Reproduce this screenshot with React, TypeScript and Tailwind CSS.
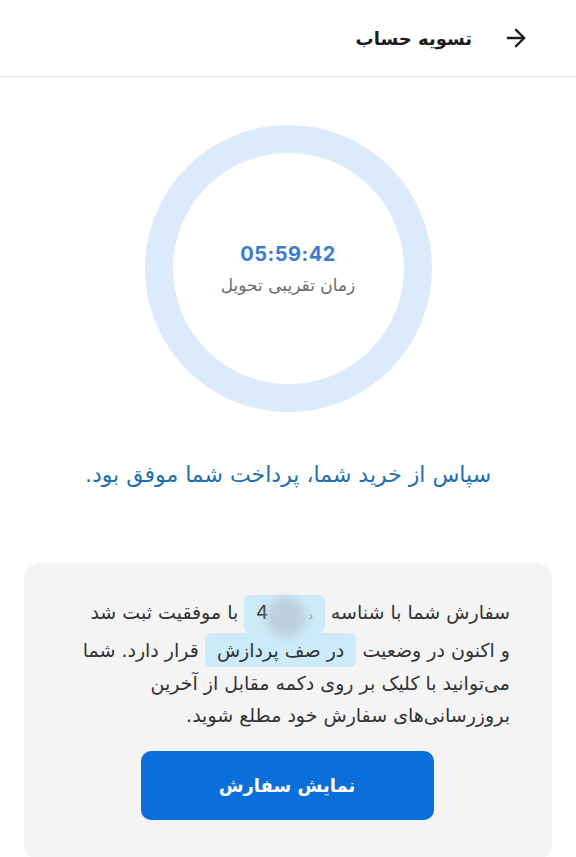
import { ArrowRight } from "lucide-react";

export default function App() {
  return (
    <div
      dir="rtl"
      className="min-h-screen bg-white font-['DejaVu_Sans',sans-serif] text-[#2b2b2b] overflow-hidden"
    >
      {/* Header */}
      <div className="h-[77px] flex items-center gap-[30px] pr-[46px] pl-11 border-b border-gray-200">
        <ArrowRight className="w-7 h-7 text-[#1c1c1c]" strokeWidth={2} />
        <h1 className="text-[18px] font-bold text-[#1c1c1c]">تسویه حساب</h1>
      </div>

      {/* Timer ring */}
      <div className="flex justify-center mt-12">
        <div className="w-[287px] h-[287px] rounded-full border-[28px] border-[#dcebfb] flex flex-col items-center justify-center">
          <div
            dir="ltr"
            className="font-['Inter',sans-serif] font-bold text-[20px] text-[#3a7dd0] tracking-wide"
          >
            05:59:42
          </div>
          <div className="text-[17px] text-[#6b6b6b] mt-1">زمان تقریبی تحویل</div>
        </div>
      </div>

      {/* Success message */}
      <p className="mt-[46px] text-center text-[22px] text-[#1f6fae]">
        سپاس از خرید شما، پرداخت شما موفق بود.
      </p>

      {/* Info card */}
      <div className="mx-6 mt-[72px] rounded-2xl bg-[#f4f4f4] pt-8 pb-10 pl-10 pr-[42px]">
        <p className="text-[19px] leading-[32px] text-[#333] whitespace-nowrap">
          سفارش شما با شناسه{" "}
          <span className="relative inline-block rounded-md bg-[#cdeaf8] px-3 leading-[34px]" dir="ltr">
            <span>4</span>
            <span className="inline-block w-10" />
            <span className="text-[10px] text-[#888]">ذ</span>
            <span className="absolute left-[22px] top-[2px] h-[40px] w-[40px] rounded-full bg-[#b8c9d6] blur-[4px] opacity-80" />
          </span>{" "}
          با موفقیت ثبت شد
          <br />و اکنون در وضعیت{" "}
          <span className="inline-block rounded-md bg-[#cdeaf8] px-3 leading-[34px]">در صف پردازش</span>{" "}
          قرار دارد. شما
          <br />
          می‌توانید با کلیک بر روی دکمه مقابل از آخرین
          <br />
          بروزرسانی‌های سفارش خود مطلع شوید.
        </p>
        <div className="flex justify-center mt-5">
          <button className="w-[293px] h-[69px] rounded-[10px] bg-[#0a6fdb] text-white text-[18px] font-bold">
            نمایش سفارش
          </button>
        </div>
      </div>
    </div>
  );
}
